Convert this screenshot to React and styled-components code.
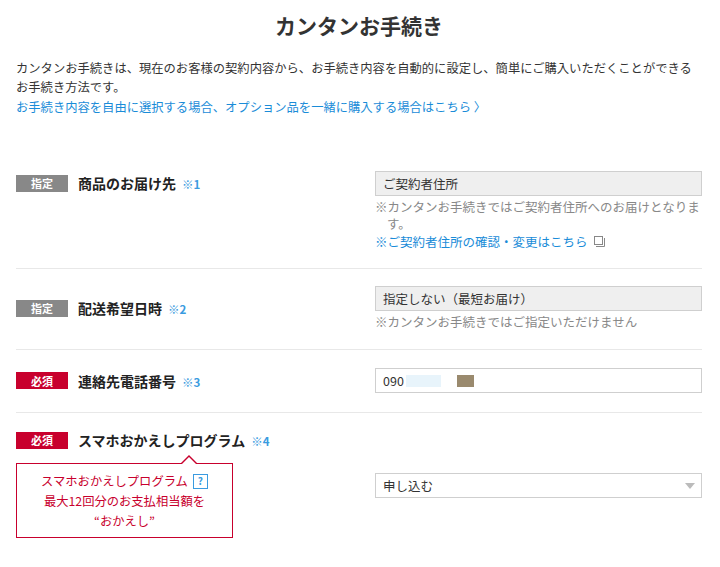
import React from "react";
import styled, { createGlobalStyle } from "styled-components";

const Global = createGlobalStyle`
  body {
    margin: 0;
    background: #fff;
    font-family: "Noto Sans CJK JP", "Liberation Sans", sans-serif;
    color: #333;
  }
`;

const S = {
  Wrap: styled.div`
    width: 686px;
    padding: 0 18px 0 16px;
  `,
  Title: styled.h1`
    margin: 0;
    padding-top: 8px;
    height: 46px;
    line-height: 34px;
    text-align: center;
    font-size: 21px;
    font-weight: bold;
    color: #333;
  `,
  Lead: styled.p`
    margin: 5px 0 0;
    font-size: 12.3px;
    line-height: 19px;
    color: #333;
  `,
  LeadLink: styled.a`
    display: block;
    margin-top: 1px;
    font-size: 12.3px;
    line-height: 19px;
    color: #1a8cd8;
    text-decoration: none;
  `,
  List: styled.div`
    margin-top: 36px;
  `,
  Row: styled.div`
    display: grid;
    grid-template-columns: 359px 1fr;
    align-items: ${({ $top }) => ($top ? "start" : "center")};
    padding: ${({ $pad }) => $pad};
    border-bottom: ${({ $last }) => ($last ? "none" : "1px solid #e8e8e8")};
  `,
  LabelCol: styled.div`
    display: flex;
    flex-direction: column;
  `,
  Label: styled.div`
    display: flex;
    align-items: center;
    gap: 10px;
    height: 24px;
    font-size: 14px;
    font-weight: bold;
    color: #222;
  `,
  Badge: styled.span`
    display: inline-flex;
    justify-content: center;
    align-items: center;
    width: 52px;
    height: 17px;
    font-size: 11px;
    font-weight: bold;
    color: #fff;
    background: ${({ $red }) => ($red ? "#c8002d" : "#888")};
  `,
  Mark: styled.span`
    margin-left: 6px;
    font-size: 11.5px;
    font-weight: bold;
    color: #3a9be0;
  `,
  Field: styled.div`
    position: relative;
    display: flex;
    align-items: center;
    height: 23px;
    padding: 0 7px;
    border: 1px solid #cfcfcf;
    background: ${({ $gray }) => ($gray ? "#efefef" : "#fff")};
    font-size: 12.5px;
    color: #333;
  `,
  Note: styled.p`
    margin: 2px 0 0;
    font-size: 12.5px;
    line-height: 17px;
    color: #888;
    padding-left: 12px;
    text-indent: -12px;
  `,
  NoteLink: styled.a`
    display: flex;
    align-items: center;
    gap: 6px;
    font-size: 12.5px;
    line-height: 19px;
    color: #1a8cd8;
    text-decoration: none;
  `,
  Mask: styled.span`
    display: inline-block;
    width: ${({ $w }) => $w}px;
    height: 12px;
    margin-left: ${({ $ml }) => $ml}px;
    background: ${({ $c }) => $c};
  `,
  Callout: styled.div`
    position: relative;
    margin-top: 11px;
    width: 215px;
    padding: 7px 0 6px;
    border: 1px solid #c8002d;
    text-align: center;
    font-size: 12.3px;
    line-height: 20px;
    color: #c8002d;
    &::before,
    &::after {
      content: "";
      position: absolute;
      left: 163px;
      border: 9px solid transparent;
      border-top: none;
    }
    &::before {
      top: -9px;
      border-bottom-color: #c8002d;
    }
    &::after {
      top: -7.5px;
      border-bottom-color: #fff;
    }
  `,
  Help: styled.span`
    display: inline-flex;
    justify-content: center;
    align-items: center;
    width: 13px;
    height: 13px;
    margin-left: 5px;
    border: 1px solid #3a9be0;
    font-size: 10px;
    font-weight: bold;
    color: #3a9be0;
    vertical-align: 1px;
    line-height: 1;
  `,
  Caret: styled.span`
    position: absolute;
    right: 6px;
    top: 9px;
    border: 5px solid transparent;
    border-top: 6px solid #bbb;
    border-bottom: none;
  `,
};

function WindowIcon() {
  return (
    <svg width="11" height="11" viewBox="0 0 11 11">
      <rect x="0.5" y="0.5" width="8" height="8" fill="#fff" stroke="#888" />
      <path d="M2 10.5h8.5V2" fill="none" stroke="#888" />
    </svg>
  );
}

function Label({ red, badge, children, mark }) {
  return (
    <S.Label>
      <S.Badge $red={red}>{badge}</S.Badge>
      <span>
        {children}
        <S.Mark>{mark}</S.Mark>
      </span>
    </S.Label>
  );
}

export default function App() {
  return (
    <>
      <Global />
      <S.Wrap>
        <S.Title>カンタンお手続き</S.Title>
        <S.Lead>
          カンタンお手続きは、現在のお客様の契約内容から、お手続き内容を自動的に設定し、簡単にご購入いただくことができるお手続き方法です。
        </S.Lead>
        <S.LeadLink>
          お手続き内容を自由に選択する場合、オプション品を一緒に購入する場合はこちら 〉
        </S.LeadLink>
        <S.List>
          <S.Row $top $pad="18px 0 17px">
            <Label badge="指定" mark="※1">商品のお届け先</Label>
            <div>
              <S.Field $gray>ご契約者住所</S.Field>
              <S.Note>※カンタンお手続きではご契約者住所へのお届けとなります。</S.Note>
              <S.NoteLink>
                ※ご契約者住所の確認・変更はこちら <WindowIcon />
              </S.NoteLink>
            </div>
          </S.Row>
          <S.Row $pad="17px 0 19px">
            <Label badge="指定" mark="※2">配送希望日時</Label>
            <div>
              <S.Field $gray>指定しない（最短お届け）</S.Field>
              <S.Note>※カンタンお手続きではご指定いただけません</S.Note>
            </div>
          </S.Row>
          <S.Row $pad="18px 0 19px">
            <Label red badge="必須" mark="※3">連絡先電話番号</Label>
            <S.Field>
              090
              <S.Mask $w={35} $ml={2} $c="#e8f4fb" />
              <S.Mask $w={17} $ml={16} $c="#9a8a6e" />
            </S.Field>
          </S.Row>
          <S.Row $last $top $pad="15px 0 0">
            <S.LabelCol>
              <Label red badge="必須" mark="※4">スマホおかえしプログラム</Label>
              <S.Callout>
                スマホおかえしプログラム<S.Help>?</S.Help>
                <br />
                最大12回分のお支払相当額を
                <br />
                “おかえし”
              </S.Callout>
            </S.LabelCol>
            <div style={{ paddingTop: 45 }}>
              <S.Field>
                申し込む
                <S.Caret />
              </S.Field>
            </div>
          </S.Row>
        </S.List>
      </S.Wrap>
    </>
  );
}
